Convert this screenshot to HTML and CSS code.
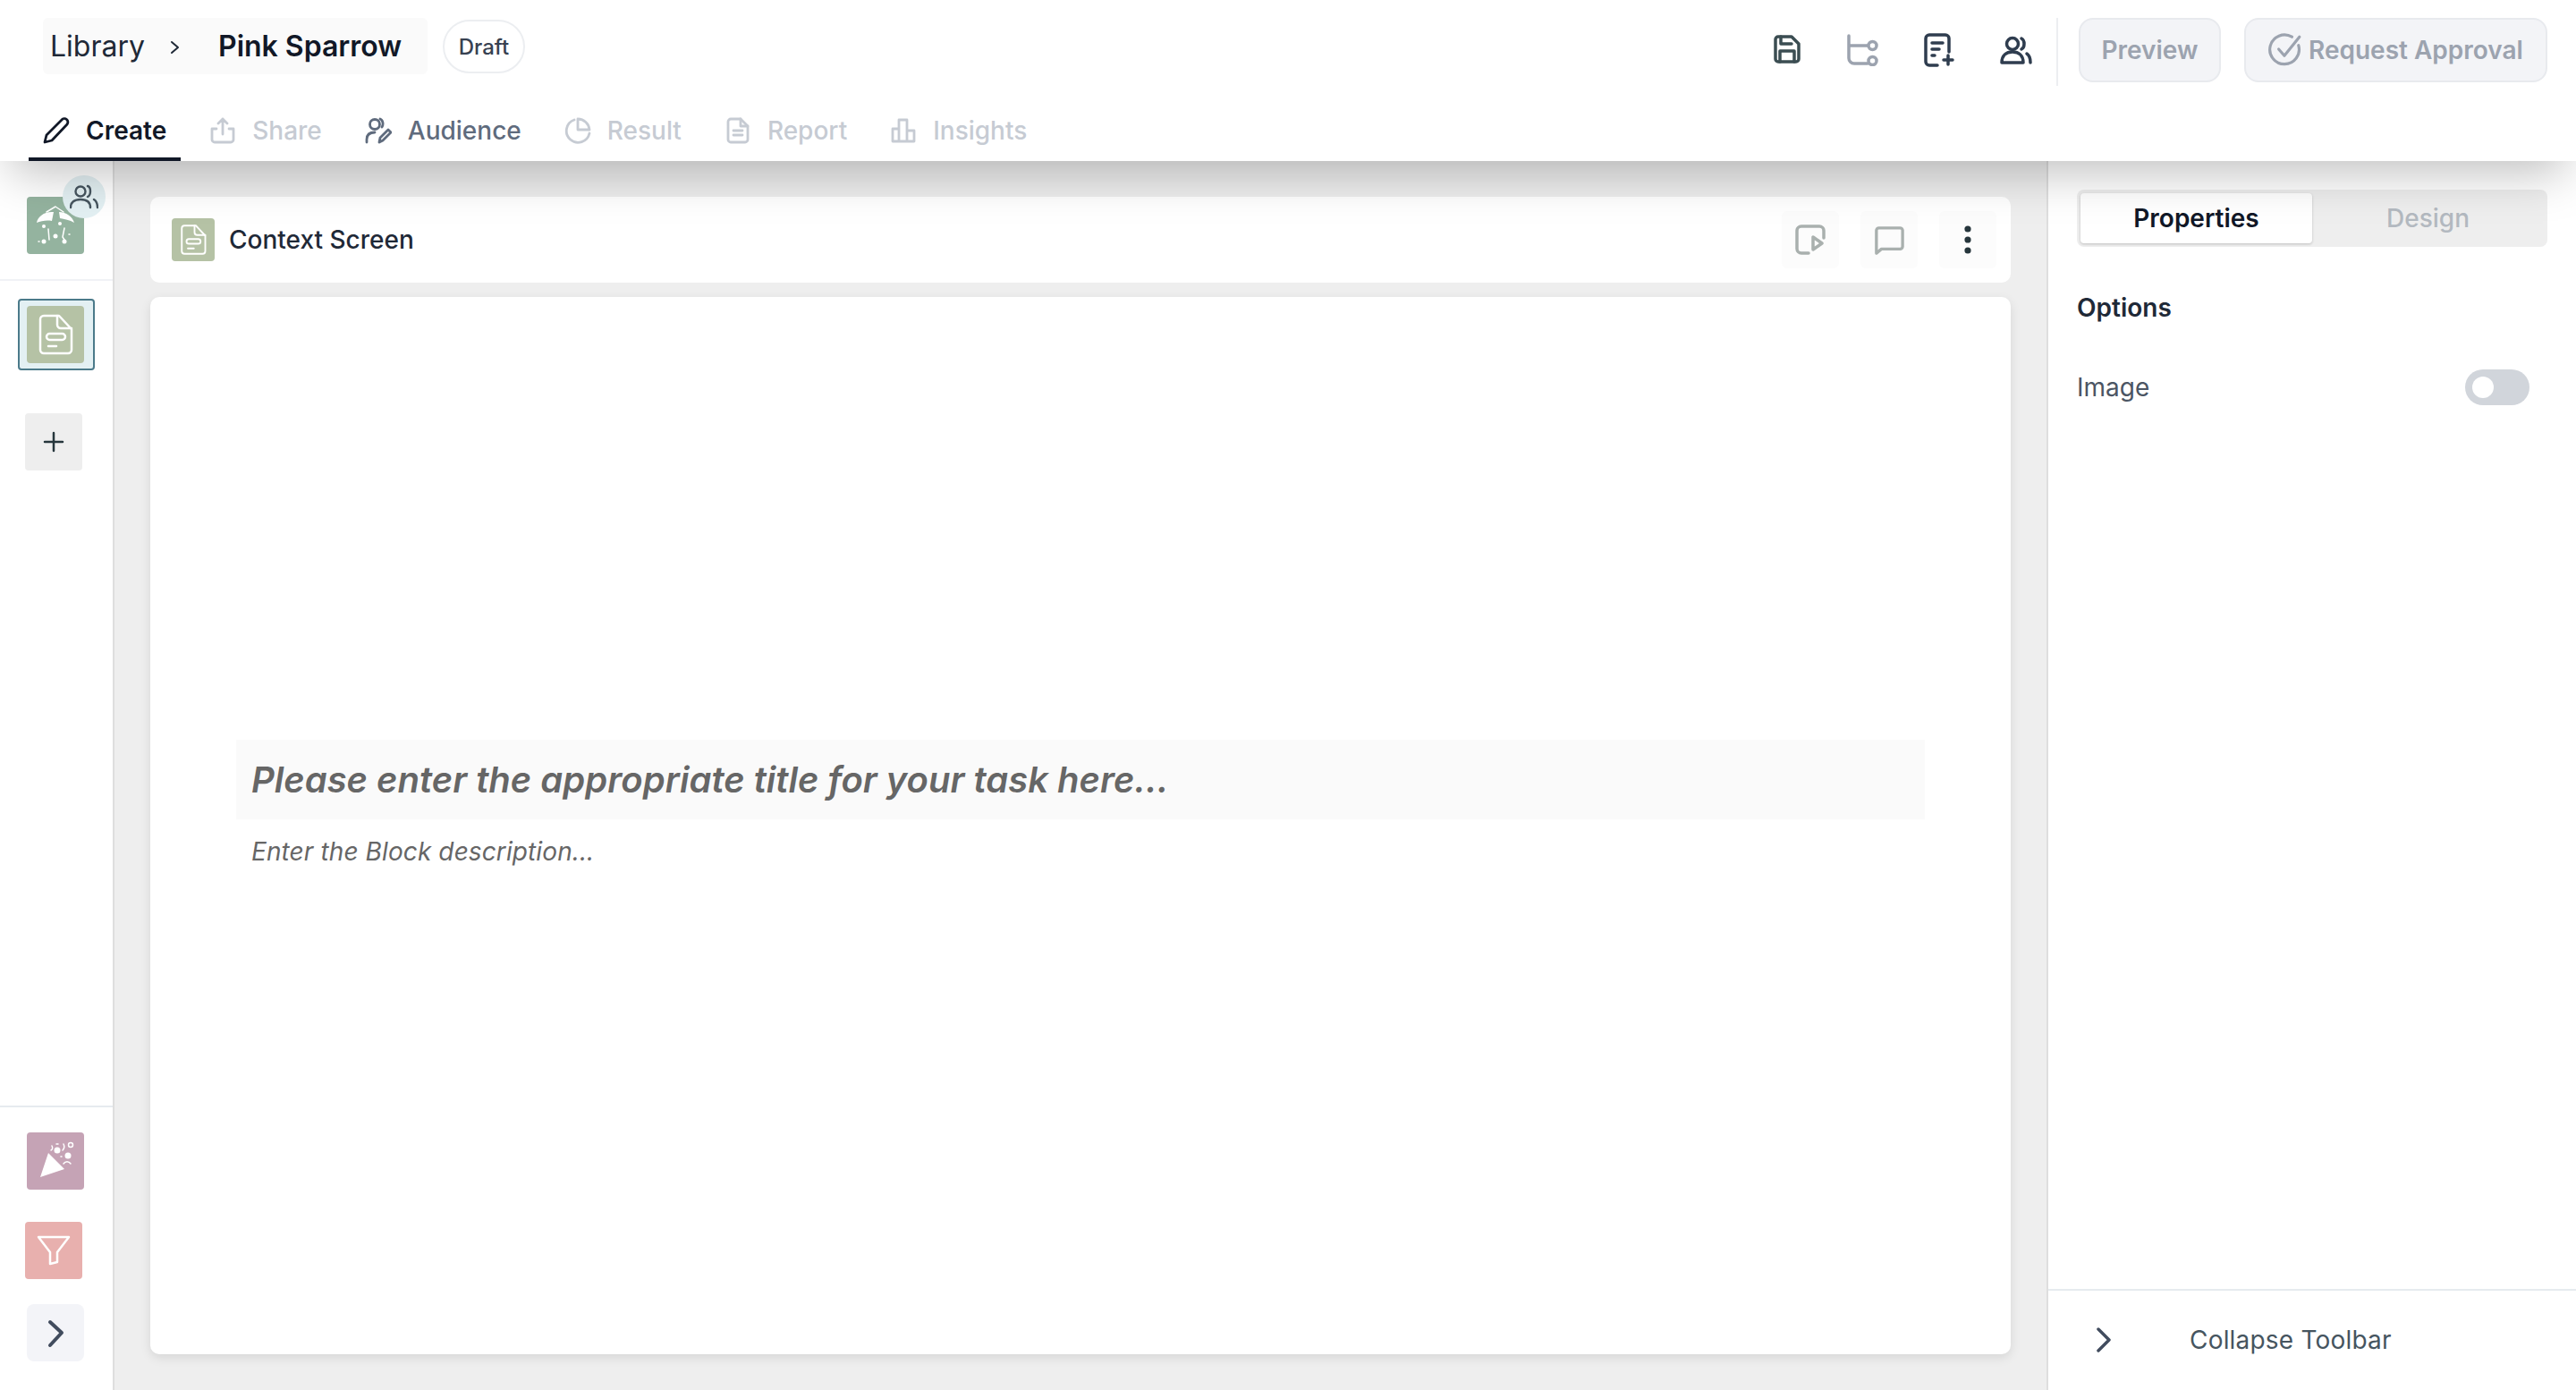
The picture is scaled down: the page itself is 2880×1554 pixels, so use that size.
FILE: index.html
```html
<!DOCTYPE html>
<html lang="en">
<head>
<meta charset="utf-8">
<title>Pink Sparrow</title>
<link rel="stylesheet" href="styles.css">
</head>
<body>
<div class="app">
  <header class="header">
    <div class="top-row">
      <div class="crumbs">
        <span class="crumb-lib">Library</span>
        <svg class="crumb-sep" viewBox="0 0 12 16"><path d="M3 2 10 8l-7 6"/></svg>
        <span class="crumb-name">Pink Sparrow</span>
      </div>
      <span class="pill">Draft</span>
      <div class="top-actions">
        <svg class="act act-save" viewBox="0 0 32 32"><path d="M3 5a3 3 0 0 1 3-3h15l8 8v17a3 3 0 0 1-3 3H6a3 3 0 0 1-3-3Z"/><path d="M9 2v8h12M8 30V18h16v12"/></svg>
        <svg class="act act-flow" viewBox="0 0 36 36"><path d="M3 2v25a6 6 0 0 0 6 6h15M3 13h21"/><circle cx="29.500" cy="13" r="4.500"/><circle cx="29.500" cy="30" r="4.500"/></svg>
        <svg class="act act-doc" viewBox="0 0 34 38"><path d="M15 36H6a4 4 0 0 1-4-4V6a4 4 0 0 1 4-4h18a4 4 0 0 1 4 4v15"/><path d="M9 11h12M9 18h8M9 25h3M27 25v10M22 30h10"/></svg>
        <svg class="act act-users" viewBox="0 0 38 32"><circle cx="15" cy="9" r="6.500"/><path d="M3 30c0-8 5-12 12-12s12 4 12 12ZM25 3c4 2 4 10 0 12M31 20c3 2 4 6 4 10"/></svg>
        <span class="top-divider"></span>
        <button class="btn btn-preview">Preview</button>
        <button class="btn btn-approve">
          <svg class="approve-icon" viewBox="0 0 36 36"><path d="M32 13a15.500 15.500 0 1 1-7-9"/><path d="m11 17 6 7L33 4"/></svg>
          Request Approval
        </button>
      </div>
    </div>
    <nav class="tabs">
      <a class="tab tab-active"><svg viewBox="0 0 30 30"><path d="M2 28 4 20 21 3a3.500 3.500 0 0 1 6 5L10 26Z"/></svg>Create</a>
      <a class="tab tab-off"><svg viewBox="0 0 30 30"><path d="M15 19V2M10 7l5-5 5 5M8 13H3v12a3 3 0 0 0 3 3h18a3 3 0 0 0 3-3V13h-5"/></svg>Share</a>
      <a class="tab tab-mid"><svg viewBox="0 0 30 30"><circle cx="11" cy="8" r="5.500"/><path d="M2 28v-3c0-5 3-8 9-8M17 2c3 1 4 6 2 9M16 28l1-5 9-9 3 3-9 9Z"/></svg>Audience</a>
      <a class="tab tab-off"><svg viewBox="0 0 30 30"><path d="M11 3a13 13 0 1 0 17 15"/><path d="M15 2a13 13 0 0 1 13 12H15Z"/></svg>Result</a>
      <a class="tab tab-off"><svg viewBox="0 0 30 30"><path d="M18 2H7a3 3 0 0 0-3 3v20a3 3 0 0 0 3 3h16a3 3 0 0 0 3-3V10Z"/><path d="M18 2v8h8M10 15h10M10 20h10"/></svg>Report</a>
      <a class="tab tab-off"><svg viewBox="0 0 30 30"><path d="M3 27V13h7v14ZM10 27V3h9v24ZM19 27V15h8v12Z"/></svg>Insights</a>
    </nav>
  </header>

  <div class="body">
    <aside class="sidebar">
      <div class="side-top">
        <div class="tile tile-green">
          <svg viewBox="0 0 64 64"><path class="fill" d="M11 29C12 22 20 16 30 17L28 27C22 26 16 27 11 29ZM53 29C51 22 44 17 36 17L37 24C42 25 48 26 53 29Z"/><path class="line thin" d="M22 17l10-6 9 6M24 36l1 12M42 35l-2 10 2 3M13 50h1M47 42h1"/><circle class="fill" cx="19" cy="33" r="2"/><circle class="fill" cx="37" cy="30" r="2"/><circle class="fill" cx="19" cy="50" r="2.500"/><circle class="fill" cx="32" cy="44" r="2.500"/><circle class="fill" cx="42" cy="50" r="2.500"/></svg>
        </div>
        <div class="people-badge">
          <svg viewBox="0 0 32 28"><circle cx="12" cy="8" r="5.500"/><path d="M1 26c0-6 4-9 11-9s11 3 11 9M20 2c4 1 4 10 0 12M27 17c3 2 4 5 4 9"/></svg>
        </div>
      </div>
      <div class="side-mid">
        <div class="selected">
          <div class="tile tile-sage">
            <svg viewBox="0 0 64 64"><path class="line" d="M36 11H19a4 4 0 0 0-4 4v34a4 4 0 0 0 4 4h27a4 4 0 0 0 4-4V26Z"/><path class="line" d="M34 11v10a4 4 0 0 0 4 4h12"/><rect class="line" x="22" y="31" width="21" height="7" rx="3.500"/><path class="line" d="M24 45h9"/></svg>
          </div>
        </div>
        <div class="plus-tile">
          <svg viewBox="0 0 24 24"><path d="M12 2v20M2 12h20"/></svg>
        </div>
      </div>
      <div class="side-bottom">
        <div class="tile tile-mauve">
          <svg viewBox="0 0 64 64"><path class="fill" d="M15 50 24 23 42 41Z"/><circle class="fill" cx="34" cy="20" r="3.500"/><circle class="fill" cx="46" cy="26" r="3.500"/><circle class="line thin" cx="49" cy="14" r="2.500"/><path class="line thin" d="M28 15c1 2 1 4-1 5M41 13c1 2 1 5-1 7M41 35c2-3 6-3 8 0M33 13h2M38 27h1"/></svg>
        </div>
        <div class="tile tile-coral">
          <svg viewBox="0 0 64 64"><path class="line" d="M15 17h34L36 34v11l-8 2V34Z"/></svg>
        </div>
        <div class="tile tile-chev">
          <svg viewBox="0 0 64 64"><path d="M26 20l13 12-13 14"/></svg>
        </div>
      </div>
    </aside>

    <main class="main">
      <div class="screen-bar">
        <div class="mini-tile">
          <svg viewBox="0 0 64 64"><path class="line" d="M36 11H19a4 4 0 0 0-4 4v34a4 4 0 0 0 4 4h27a4 4 0 0 0 4-4V26Z"/><path class="line" d="M34 11v10a4 4 0 0 0 4 4h12"/><rect class="line" x="22" y="31" width="21" height="7" rx="3.500"/><path class="line" d="M24 45h9"/></svg>
        </div>
        <span class="screen-name">Context Screen</span>
        <div class="bar-actions">
          <span class="bar-btn"><svg viewBox="0 0 34 34"><path d="M32 15V7a5 5 0 0 0-5-5H7a5 5 0 0 0-5 5v20a5 5 0 0 0 5 5h8"/><path d="M20 14v14l10-7Z"/></svg></span>
          <span class="bar-btn"><svg viewBox="0 0 36 36"><path d="M3 34V7a3 3 0 0 1 3-3h25a3 3 0 0 1 3 3v19a3 3 0 0 1-3 3H9Z"/></svg></span>
          <span class="bar-btn bar-more"><svg viewBox="0 0 8 32"><circle cx="4" cy="4" r="3.600"/><circle cx="4" cy="16" r="3.600"/><circle cx="4" cy="28" r="3.600"/></svg></span>
        </div>
      </div>
      <section class="canvas">
        <div class="title-field">Please enter the appropriate title for your task here...</div>
        <div class="desc-field">Enter the Block description...</div>
      </section>
    </main>

    <aside class="panel">
      <div class="panel-main">
        <div class="seg">
          <span class="seg-item seg-active">Properties</span>
          <span class="seg-item">Design</span>
        </div>
        <h2 class="panel-heading">Options</h2>
        <div class="opt-row">
          <span class="opt-label">Image</span>
          <span class="toggle"><span class="knob"></span></span>
        </div>
      </div>
      <div class="panel-foot">
        <svg viewBox="0 0 16 28"><path d="M2 2l12 12L2 26"/></svg>
        <span>Collapse Toolbar</span>
      </div>
    </aside>
  </div>
</div>
</body>
</html>
```
FILE: styles.css
```css
* { box-sizing: border-box; }
html, body { margin: 0; height: 100%; }
body { font-family: Inter, "Liberation Sans", sans-serif; background: #eeeeee; color: #111827; overflow: hidden; }
svg { display: block; fill: none; stroke-linecap: round; stroke-linejoin: round; }
.app { width: 2880px; height: 1554px; display: flex; flex-direction: column; }

.header { height: 180px; flex: none; background: #fff; display: flex; flex-direction: column; justify-content: space-between; position: relative; z-index: 5; box-shadow: 0 25px 50px -12px rgba(0,0,0,.25); }
.top-row { display: flex; align-items: flex-start; padding: 20px 32px 0 48px; }
.crumbs { width: 430px; height: 63px; background: #fafafa; border-radius: 6px; display: flex; align-items: center; padding-left: 8px; font-size: 32px; }
.crumb-lib { color: #1f2937; }
.crumb-sep { width: 12px; height: 16px; margin: 2px 0 0 27px; stroke: #1f2937; stroke-width: 2; }
.crumb-name { font-weight: 600; margin-left: 43px; }
.pill { margin: 2px 0 0 17px; width: 92px; height: 60px; border: 2px solid #eceef1; border-radius: 30px; display: flex; align-items: center; justify-content: center; font-size: 24px; font-weight: 500; color: #374151; }
.top-actions { margin-left: auto; display: flex; align-items: flex-start; }
.act { stroke-width: 3.500; }
.act-save { width: 32px; height: 32px; margin: 19px 0 0 0; stroke: #3b4d52; }
.act-flow { width: 36px; height: 36px; margin: 18px 0 0 50px; stroke: #9ca3af; }
.act-doc { width: 34px; height: 38px; margin: 17px 0 0 51px; stroke: #2f3d4f; }
.act-users { width: 38px; height: 32px; margin: 20px 0 0 50px; stroke: #2f3d4f; }
.top-divider { width: 2px; height: 76px; background: #eceef1; margin-left: 26px; }
.btn { height: 72px; border: 2px solid #e8eaee; border-radius: 16px; background: #f3f4f7; color: #9ca3af; font: 600 28px Inter, sans-serif; display: flex; align-items: center; justify-content: center; padding: 0; }
.btn-preview { width: 159px; margin-left: 23px; }
.btn-approve { width: 339px; margin-left: 26px; gap: 7px; }
.approve-icon { width: 38px; height: 38px; stroke: #9ca3af; stroke-width: 3; }

.tabs { display: flex; gap: 16px; margin-left: 32px; }
.tab { display: flex; align-items: center; gap: 18px; height: 62px; padding: 0 16px 2px; font-size: 28px; font-weight: 500; border-bottom: 4px solid transparent; }
.tab svg { width: 30px; height: 30px; stroke: currentColor; stroke-width: 2.800; }
.tab-active { color: #111827; font-weight: 600; border-bottom-color: #111827; }
.tab-off { color: #c6cbd3; }
.tab-mid { color: #5f6b7d; }

.body { flex: 1; display: flex; min-height: 0; }
.sidebar { width: 128px; flex: none; background: #fff; border-right: 2px solid #dedede; display: flex; flex-direction: column; }
.side-top { height: 134px; flex: none; padding: 40px 0 0 30px; border-bottom: 2px solid #f0f2f6; position: relative; }
.tile { width: 64px; height: 64px; border-radius: 4px; }
.tile svg { width: 64px; height: 64px; }
.fill { fill: #fff; stroke: none; }
.line { stroke: #fff; stroke-width: 2.500; fill: none; }
.thin { stroke-width: 1.500; }
.tile-green { background: #94b39f; }
.tile-sage { background: #b5c2a5; }
.tile-mauve { background: #c5a3b5; margin-left: 30px; }
.tile-coral { background: #e8b0ae; margin: 36px 0 0 28px; }
.tile-chev { background: #f3f4f8; border-radius: 8px; margin: 28px 0 0 30px; }
.tile-chev svg { stroke: #414c5e; stroke-width: 4; }
.people-badge { position: absolute; left: 70px; top: 16px; width: 48px; height: 48px; border-radius: 50%; background: #e3f0f3; display: flex; align-items: center; justify-content: center; }
.people-badge svg { width: 32px; height: 28px; stroke: #46555f; stroke-width: 2.400; }
.side-mid { flex: 1; padding: 20px 0 0 20px; }
.selected { width: 86px; height: 80px; border: 2px solid #4b7a8a; border-radius: 4px; background: #e3f0f3; padding: 6px 8px; }
.plus-tile { width: 64px; height: 64px; margin: 48px 0 0 8px; border-radius: 4px; background: #eeeeee; display: flex; align-items: center; justify-content: center; }
.plus-tile svg { width: 24px; height: 24px; stroke: #26363c; stroke-width: 2.500; }
.side-bottom { flex: none; border-top: 2px solid #e6ebef; padding: 28px 0 32px; }

.main { flex: 1; min-width: 0; padding: 40px 40px 40px 40px; display: flex; flex-direction: column; gap: 16px; }
.screen-bar { height: 96px; flex: none; background: #fff; border-radius: 10px; display: flex; align-items: center; padding: 0 16px 0 24px; }
.mini-tile { width: 48px; height: 48px; border-radius: 4px; background: #b5c2a5; }
.mini-tile svg { width: 48px; height: 48px; }
.screen-name { font-size: 28px; font-weight: 500; margin-left: 16px; color: #1f2937; }
.bar-actions { margin-left: auto; display: flex; gap: 24px; }
.bar-btn { width: 64px; height: 64px; border-radius: 6px; background: #fcfcfc; display: flex; align-items: center; justify-content: center; }
.bar-btn svg { width: 34px; height: 34px; stroke: #a9b0ae; stroke-width: 3.500; }
.bar-more svg { width: 8px; height: 32px; stroke: none; fill: #26363c; }
.canvas { flex: 1; background: #fff; border-radius: 10px; box-shadow: 0 4px 12px rgba(0,0,0,.1); padding: 0 96px; display: flex; flex-direction: column; justify-content: center; }
.title-field { height: 89px; background: #fafafa; padding-left: 17px; display: flex; align-items: center; font-size: 40px; font-style: italic; font-weight: 600; color: #666; }
.desc-field { margin: 19px 0 50px; padding-left: 17px; line-height: 34px; font-size: 28px; font-style: italic; color: #666; letter-spacing: .1px; }

.panel { width: 592px; flex: none; background: #fff; border-left: 2px solid #dedede; display: flex; flex-direction: column; }
.panel-main { flex: 1; padding: 32px 32px 0 32px; }
.seg { height: 64px; background: #eeeeee; border-radius: 8px; padding: 4px; display: flex; }
.seg-item { width: 259px; display: flex; align-items: center; justify-content: center; font-size: 28px; font-weight: 500; color: #b3b9c0; }
.seg-active { background: #fff; color: #111827; font-weight: 600; border-radius: 4px; box-shadow: 0 1px 3px rgba(0,0,0,.2); }
.panel-heading { margin: 51px 0 0; font-size: 28px; line-height: 34px; font-weight: 600; color: #1f2937; }
.opt-row { margin-top: 52px; height: 40px; display: flex; align-items: center; justify-content: space-between; padding-right: 20px; }
.opt-label { font-size: 28px; color: #4b5563; }
.toggle { width: 72px; height: 40px; border-radius: 20px; background: #d1d5db; padding: 8px; }
.knob { display: block; width: 24px; height: 24px; border-radius: 50%; background: #fff; }
.panel-foot { height: 113px; flex: none; border-top: 2px solid #e6ebef; display: flex; align-items: center; padding: 0 0 2px 54px; gap: 88px; font-size: 28px; color: #46555f; letter-spacing: .2px; }
.panel-foot svg { width: 16px; height: 28px; stroke: #414c5e; stroke-width: 3.500; }
```
